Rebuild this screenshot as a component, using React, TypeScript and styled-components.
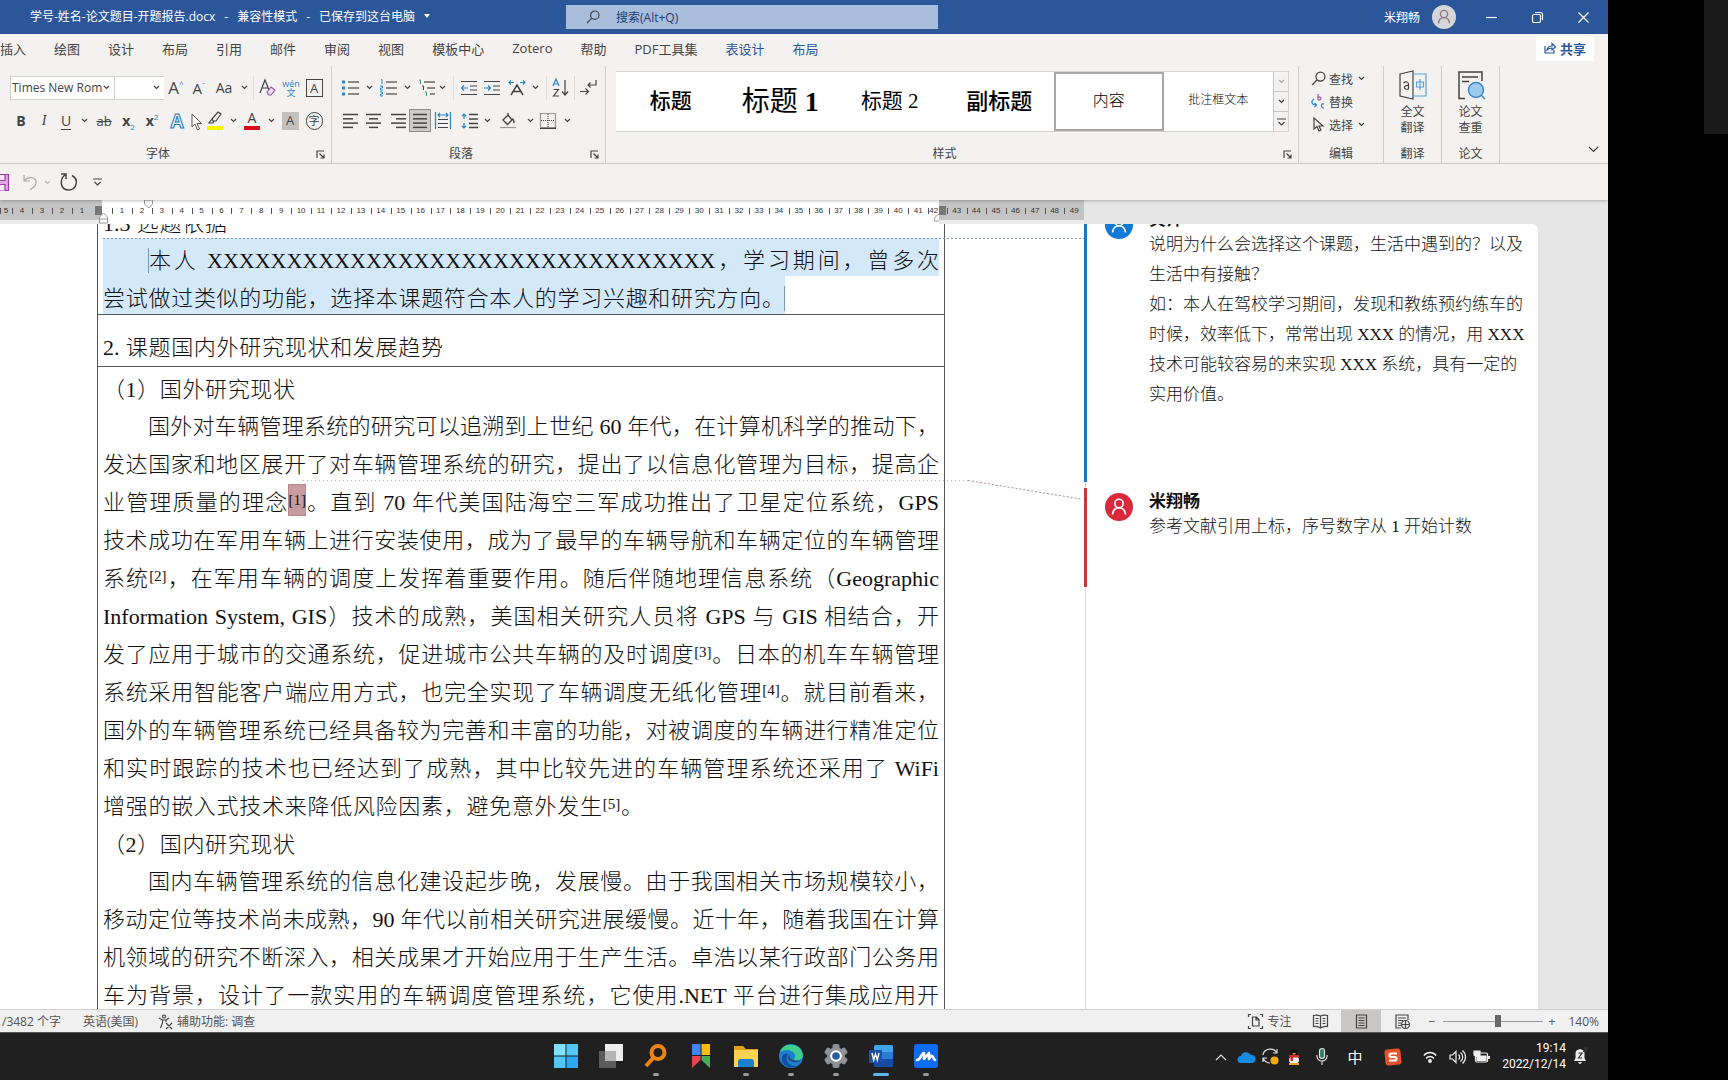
import React from "react";
import styled, { createGlobalStyle, css } from "styled-components";

const UI = `"Open Sans", "Noto Sans CJK SC", sans-serif`;
const SERIF = `"Liberation Serif", "Noto Sans CJK SC Light", "Noto Sans CJK SC", serif`;
const HEADING = `"Liberation Serif", "Noto Sans CJK SC", serif`;
const INK = "#444444";
const BLUE = "#2b579a";
const ICON_BLUE = "#2e86c8";

const GlobalStyle = createGlobalStyle`
  * { box-sizing: border-box; }
  body { margin: 0; background: #000; font-family: ${UI}; overflow: hidden; }
  button, input, select { font: inherit; color: inherit; }
  button { border: 0; padding: 0; background: transparent; }
  p, h1, h2, h3 { margin: 0; font-weight: inherit; font-size: inherit; }
`;

/* ---------- frame ---------- */
const Screen = styled.div`
  display: flex;
  height: 100vh;
  background: #000;
`;
const Desktop = styled.div`
  flex: 1;
  min-width: 0;
  display: flex;
  flex-direction: column;
  overflow: hidden;
`;
const SideBand = styled.aside`
  flex: 0 0 120px;
  display: flex;
  justify-content: flex-end;
  align-items: flex-start;
`;
const SidePanel = styled.div`
  width: 24px;
  height: 134px;
  background: #191919;
`;
const Icon = styled.svg`
  display: block;
  flex: none;
  fill: none;
  stroke: ${INK};
  stroke-width: 1.2;
  overflow: visible;
`;

/* ---------- title bar ---------- */
const TitleBar = styled.header`
  flex: 0 0 34px;
  display: flex;
  align-items: center;
  background: ${BLUE};
  color: #fff;
  font-size: 12px;
`;
const DocTitle = styled.div`
  flex: 0 0 566px;
  padding-left: 30px;
  padding-bottom: 2px;
  display: flex;
  align-items: center;
  gap: 9px;
  white-space: pre;
`;
const SearchBox = styled.label`
  display: flex;
  align-items: center;
  gap: 14px;
  flex: 0 1 372px;
  height: 24px;
  padding-left: 20px;
  background: #a9bedd;
  color: #1e3c70;
`;
const SearchInput = styled.input`
  flex: 1;
  min-width: 0;
  border: 0;
  outline: 0;
  background: transparent;
  &::placeholder { color: #1e3c70; opacity: 1; }
`;
const Account = styled.div`
  margin-left: auto;
  display: flex;
  align-items: center;
  gap: 12px;
`;
const WindowButtons = styled.div`
  display: flex;
  padding: 0 2px 0 12px;
`;
const WindowButton = styled.button`
  width: 46px;
  height: 34px;
  display: grid;
  place-items: center;
`;

/* ---------- tabs ---------- */
const TabRow = styled.nav`
  flex: 0 0 32px;
  display: flex;
  align-items: center;
  gap: 28px;
  background: #f3f2f1;
  font-size: 13px;
  color: ${INK};
  padding: 0 14px 4px 0;
`;
const Tab = styled.button<{ $context?: boolean }>`
  white-space: nowrap;
  height: 28px;
  color: ${(p) => (p.$context ? BLUE : INK)};
`;
const ShareButton = styled.button`
  margin-left: auto;
  display: flex;
  align-items: center;
  gap: 4px;
  height: 25px;
  padding: 0 8px;
  background: #fff;
  color: ${BLUE};
  font-weight: 700;
`;

/* ---------- ribbon ---------- */
const Ribbon = styled.section`
  flex: 0 0 98px;
  display: flex;
  background: #f3f2f1;
  border-bottom: 1px solid #d2d0ce;
  color: ${INK};
  font-size: 12px;
`;
const Group = styled.div<{ $w: number; $top?: number }>`
  flex: 0 0 ${(p) => p.$w}px;
  min-width: 0;
  display: flex;
  flex-direction: column;
  border-right: 1px solid #cfcdcb;
  padding-top: ${(p) => p.$top ?? 5}px;
`;
const ToolRow = styled.div<{ $left: number }>`
  display: flex;
  align-items: center;
  height: 33px;
  padding-left: ${(p) => p.$left}px;
`;
const Tool = styled.button<{ $w: number; $on?: boolean }>`
  flex: 0 0 ${(p) => p.$w}px;
  min-width: 0;
  height: 23px;
  display: grid;
  place-items: center;
  place-content: center;
  ${(p) => p.$on && css`background: #cdcbc9; border: 1px solid #8f8d8b;`}
`;
const Divider = styled.i<{ $w: number }>`
  flex: 0 0 ${(p) => p.$w}px;
  height: 24px;
  display: flex;
  justify-content: center;
  &::before { content: ""; width: 1px; background: #dddbd9; }
`;
const Field = styled.label<{ $w: number }>`
  flex: 0 0 ${(p) => p.$w}px;
  min-width: 0;
  display: flex;
  align-items: center;
  height: 24px;
  padding-right: 4px;
  background: #fff;
  border: 1px solid #d4d2d0;
  border-width: 1px 0 1px 1px;
`;
const Select = styled.select`
  flex: 1 1 0;
  width: 0;
  min-width: 0;
  appearance: none;
  border: 0;
  outline: 0;
  padding: 0 0 0 1px;
  background: transparent;
  overflow: hidden;
  text-overflow: clip;
  font-size: 12px;
`;
const GroupFoot = styled.div<{ $launcher?: boolean }>`
  margin-top: auto;
  display: grid;
  grid-template-columns: ${(p) => (p.$launcher ? "1fr 15px" : "1fr")};
  align-items: center;
  height: 18px;
  line-height: 18px;
  text-align: center;
  white-space: nowrap;
`;
const Gallery = styled.div`
  display: flex;
  margin: 0 9px 0 10px;
  height: 61px;
  background: #fff;
  border: 1px solid #d4d2d0;
  border-left: 0;
`;
const Style = styled.button<{ $size: number; $tone: string; $on?: boolean }>`
  flex: 1 1 0;
  min-width: 0;
  font-family: ${(p) => (p.$tone === "light" ? SERIF : HEADING)};
  font-size: ${(p) => p.$size}px;
  font-weight: ${(p) => (p.$tone === "heavy" ? 500 : 400)};
  color: #000;
  white-space: nowrap;
  border: 2px solid ${(p) => (p.$on ? "#a9a7a5" : "transparent")};
  padding-bottom: 5px;
`;
const GalleryScroll = styled.div`
  flex: 0 0 15px;
  display: flex;
  flex-direction: column;
`;
const ScrollButton = styled.button`
  flex: 1;
  display: grid;
  place-items: center;
  background: #f3f2f1;
  border: 1px solid #c8c6c4;
  border-width: 0 0 1px 1px;
  &:last-child { border-bottom: 0; }
`;
const EditButton = styled.button`
  display: grid;
  grid-template-columns: 20px 26px 14px;
  align-items: center;
  justify-items: center;
  height: 23px;
  margin-left: 9px;
  white-space: nowrap;
`;
const BigButton = styled.button`
  display: flex;
  flex-direction: column;
  align-items: center;
  gap: 5px;
  line-height: 16px;
`;
const RibbonEnd = styled.div`
  flex: 1;
  display: flex;
  justify-content: flex-end;
  align-items: flex-end;
  padding: 0 9px 10px;
`;

/* ---------- quick access ---------- */
const QuickBar = styled.div`
  flex: 0 0 36px;
  display: flex;
  align-items: center;
  background: #f3f2f1;
  box-shadow: 0 1px 3px #00000040;
  z-index: 1;
`;

/* ---------- ruler ---------- */
const Ruler = styled.div`
  flex: 0 0 24px;
  display: flex;
  align-items: flex-start;
  background: #e6e6e6;
  font-family: "Liberation Sans", sans-serif;
  font-size: 8px;
  line-height: 10px;
  color: #333;
`;
const RulerPart = styled.div<{ $w: number; $page?: boolean; $pad: string }>`
  position: relative;
  flex: 0 0 ${(p) => p.$w}px;
  height: 24px;
  display: flex;
  justify-content: ${(p) => (p.$page ? "flex-start" : "flex-end")};
  padding: ${(p) => p.$pad};
  background: ${(p) =>
    p.$page ? "#fff" : "linear-gradient(#c4c4c4 0 20px, #ececec 20px)"};
`;
const Mark = styled.span<{ $w?: number }>`
  flex: ${(p) => (p.$w ? `0 0 ${p.$w}px` : "1 1 0")};
  min-width: 0;
  display: flex;
  align-items: center;
  justify-content: center;
  height: 21px;
  background: linear-gradient(#555, #555) left center / 1px 6px no-repeat;
`;
const MarginGrip = styled.i<{ $end?: boolean }>`
  position: absolute;
  top: 6px;
  ${(p) => (p.$end ? "left: 0" : "right: 0")};
  width: 7px;
  height: 9px;
  background: #777;
`;
const IndentHandle = styled.svg<{ $x: number; $y: number }>`
  position: absolute;
  left: ${(p) => p.$x}px;
  top: ${(p) => p.$y}px;
  fill: #fff;
  stroke: #999;
  overflow: visible;
`;

/* ---------- document ---------- */
const Workspace = styled.main`
  position: relative;
  flex: 1;
  min-height: 0;
  display: flex;
  overflow: hidden;
  background: #e6e6e6;
`;
const Page = styled.article`
  flex: 0 0 1084px;
  background: #fff;
  padding-left: 97px;
`;
const FormTable = styled.table`
  width: 848px;
  margin-top: -24px;
  border-collapse: collapse;
  table-layout: fixed;
  font-family: ${SERIF};
  font-size: 22px;
  color: #111;
`;
const Cell = styled.td<{ $title?: boolean }>`
  border: 1px solid #555;
  padding: ${(p) => (p.$title ? "10px 5px 3px" : "0 5px")};
  vertical-align: top;
`;
const Line = styled.span<{ $measure?: number; $indent?: boolean; $selected?: boolean; $short?: boolean }>`
  display: block;
  width: ${(p) => (p.$measure ? p.$measure + "px" : "auto")};
  height: ${(p) => (p.$short ? 37 : 38)}px;
  padding-top: 8px;
  line-height: 30px;
  text-indent: ${(p) => (p.$indent ? "45px" : "0")};
  white-space: nowrap;
  text-align: justify;
  text-align-last: justify;
  background: ${(p) => (p.$selected ? "#d3e8f8" : "transparent")};
`;
const Caret = styled.span`
  border-left: 1px solid #7a98b4;
`;
const Cite = styled.span<{ $mark?: boolean }>`
  font-size: 15px;
  line-height: 20px;
  vertical-align: 5px;
  ${(p) => p.$mark && css`
    background: #c79da1;
    padding: 8px 0;
    box-shadow: inset 0 0 0 1px #b8868b;
  `}
`;
const Connectors = styled.svg`
  position: absolute;
  left: 0;
  top: 0;
  width: 1085px;
  height: 400px;
  fill: none;
  pointer-events: none;
`;

/* ---------- comments ---------- */
const Comments = styled.aside`
  flex: 0 0 454px;
  display: flex;
  flex-direction: column;
  gap: 6px;
  border-radius: 0 6px 0 0;
  background: linear-gradient(#dcdcdc, #dcdcdc) 1px 0 / 1px 100% no-repeat #fff;
`;
const Comment = styled.section<{ $color: string; $h: number; $first?: boolean }>`
  display: flex;
  gap: 16px;
  height: ${(p) => p.$h}px;
  flex: none;
  margin-top: ${(p) => (p.$first ? -18 : 0)}px;
  padding: 4px 0 0 18px;
  border-left: 3px solid ${(p) => p.$color};
  font-family: ${SERIF};
  font-size: 17px;
  line-height: 30px;
  color: #111;
`;
const Avatar = styled.div`
  padding-top: 1px;
`;
const CommentAuthor = styled.h3`
  font-family: ${HEADING};
  font-weight: 700;
  line-height: 20px;
`;
const CommentText = styled.p`
  white-space: nowrap;
`;

/* ---------- status bar ---------- */
const StatusBar = styled.footer`
  flex: 0 0 23px;
  display: flex;
  align-items: center;
  background: #f1f0f0;
  border-top: 1px solid #d0cece;
  color: #555;
  font-size: 12px;
  white-space: nowrap;
`;
const StatusText = styled.span`
  display: flex;
  align-items: center;
  gap: 4px;
  padding: 0 10px;
  &:first-child { padding: 0 12px 0 2px; }
`;
const StatusButton = styled.button<{ $w: number; $on?: boolean }>`
  width: ${(p) => p.$w}px;
  height: 22px;
  display: flex;
  align-items: center;
  justify-content: center;
  gap: 4px;
  background: ${(p) => (p.$on ? "#c9c7c6" : "transparent")};
`;
const StatusRight = styled.div`
  margin-left: auto;
  display: flex;
  align-items: center;
  padding-right: 9px;
`;
const ZoomSlider = styled.input`
  appearance: none;
  width: 100px;
  height: 16px;
  margin: 0 2px;
  background: linear-gradient(#999, #999) center / 100% 1px no-repeat;
  &::-webkit-slider-thumb {
    appearance: none;
    width: 6px;
    height: 12px;
    background: #666;
  }
`;
const ZoomValue = styled.span`
  width: 40px;
  text-align: right;
`;

/* ---------- taskbar ---------- */
const Taskbar = styled.footer`
  flex: 0 0 48px;
  display: flex;
  align-items: center;
  padding-left: 33.8%;
  background: #202020;
  border-top: 1px solid #555;
  color: #fff;
`;
const TaskButton = styled.button<{ $state?: "open" | "active" }>`
  flex: 0 0 45px;
  height: 46px;
  display: flex;
  flex-direction: column;
  align-items: center;
  padding-top: 10px;
  gap: 5px;
  &::after {
    content: "";
    height: 3px;
    border-radius: 2px;
    width: ${(p) => (p.$state === "active" ? 16 : p.$state ? 6 : 0)}px;
    background: ${(p) => (p.$state === "active" ? "#5bb8ee" : "#9a9a9a")};
  }
`;
const Tray = styled.div`
  margin-left: auto;
  display: flex;
  align-items: center;
  padding-right: 14px;
`;
const TrayButton = styled.button<{ $w: number }>`
  width: ${(p) => p.$w}px;
  height: 40px;
  display: grid;
  place-items: center;
  font-size: 15px;
`;
const Clock = styled.time`
  width: 72px;
  font-family: Roboto, sans-serif;
  font-size: 12px;
  line-height: 16px;
  padding-bottom: 2px;
  text-align: right;
`;

/* ---------- glyphs ---------- */
const Chevron = ({ color = INK }: { color?: string }) => (
  <Icon width="7" height="5" viewBox="0 0 7 5" style={{ stroke: color }}><path d="M1 1l2.500 2.500L6 1" /></Icon>
);
const Letter = styled.span<{ $size?: number; $bold?: boolean; $italic?: boolean; $deco?: string; $color?: string }>`
  font-size: ${(p) => p.$size || 15}px;
  line-height: 20px;
  font-weight: ${(p) => (p.$bold ? 700 : 400)};
  font-style: ${(p) => (p.$italic ? "italic" : "normal")};
  text-decoration: ${(p) => p.$deco || "none"};
  text-underline-offset: 3px;
  color: ${(p) => p.$color || INK};
  white-space: nowrap;
  & > sup, & > sub { font-size: 8px; line-height: 0; font-weight: 400; color: ${ICON_BLUE}; }
`;
const Boxed = styled(Letter)<{ $fill?: boolean; $round?: boolean }>`
  width: 17px;
  height: 18px;
  line-height: 16px;
  text-align: center;
  border: ${(p) => (p.$fill ? 0 : 1)}px solid ${INK};
  background: ${(p) => (p.$fill ? "#c3c1bf" : "transparent")};
  border-radius: ${(p) => (p.$round ? 9 : 0)}px;
`;
const Underbar = styled.span<{ $color: string }>`
  display: grid;
  justify-items: center;
  width: 16px;
  height: 19px;
  border-bottom: 4px solid ${(p) => p.$color};
`;
const Phonetic = styled.span`
  display: grid;
  justify-items: center;
  font-size: 9px;
  line-height: 9px;
  color: ${ICON_BLUE};
`;
const Outlined = styled.span`
  font-size: 19px;
  line-height: 20px;
  font-weight: 700;
  color: #e6f3fb;
  -webkit-text-stroke: 1px #2577b5;
`;
const Pointer = styled.svg`
  position: absolute;
  left: 191px;
  top: 113px;
  fill: #fff;
  stroke: #555;
`;

const Launcher = () => (
  <Icon width="9" height="9" viewBox="0 0 9 9"><path d="M1 8V1h7M3.500 3.500L8 8M8 4.500V8H4.500" /></Icon>
);
const Lens = ({ size = 14 }: { size?: number }) => (
  <Icon width={size} height={size} viewBox="0 0 14 14"><circle cx="8.800" cy="5.200" r="4.200" /><path d="M5.800 8.200L1 13" /></Icon>
);
const Lines = ({ rows }: { rows: [number, number][] }) => (
  <Icon width="16" height="16" viewBox="0 0 16 16" style={{ strokeWidth: 1.5 }}>
    {rows.map(([a, b], i) => <path key={i} d={`M${a} ${1.5 + i * 4.300}H${b}`} />)}
  </Icon>
);
const ListIcon = ({ kind }: { kind: "dot" | "num" | "multi" }) => (
  <Icon width="17" height="16" viewBox="0 0 17 16">
    {[2, 8, 14].map((y, i) => {
      const x = kind === "multi" ? 1 + i * 3 : 1;
      return (
        <g key={y}>
          <path d={`M${x + 5} ${y}H17`} />
          {kind === "dot" && <rect x="0" y={y - 1.5} width="3" height="3" fill={ICON_BLUE} stroke="none" />}
          {kind === "num" && <path d={i === 0 ? "M1 0l1-.5v4.500" : `M0 ${y - 2}h2.500v2H.5v2H3`} stroke={ICON_BLUE} strokeWidth="1" />}
          {kind === "multi" && <path d={`M${x} ${y - 2}h1.500v4`} stroke={i === 1 ? "#444" : "#4f9a70"} strokeWidth="1" />}
        </g>
      );
    })}
  </Icon>
);
const IndentIcon = ({ flip }: { flip?: boolean }) => (
  <Icon width="16" height="16" viewBox="0 0 16 16">
    <path d="M0 1.500h16M9 6h7M9 10h7M0 14.500h16" />
    <path stroke={ICON_BLUE} d={flip ? "M0 8h6M4 5.500L6.500 8 4 10.500" : "M7 8H1M3 5.500L.5 8 3 10.500"} />
  </Icon>
);
const Person = ({ size, bg, line }: { size: number; bg: string; line: string }) => (
  <Icon width={size} height={size} viewBox="0 0 28 28" style={{ stroke: line, strokeWidth: 1.600 }}>
    <circle cx="14" cy="14" r="14" fill={bg} stroke="none" />
    <circle cx="14" cy="10.500" r="4.200" />
    <path d="M7.500 21.500c.5-4.500 3-6.800 6.500-6.800s6 2.300 6.500 6.800" />
  </Icon>
);

const tabs = ["插入", "绘图", "设计", "布局", "引用", "邮件", "审阅", "视图", "模板中心", "Zotero", "帮助", "PDF工具集"];
const styles = [
  { name: "标题", size: 21, tone: "heavy" },
  { name: "标题 ", strong: "1", size: 28, tone: "regular" },
  { name: "标题 2", size: 21, tone: "regular" },
  { name: "副标题", size: 22, tone: "heavy" },
  { name: "内容", size: 16, tone: "light", on: true },
  { name: "批注框文本", size: 12, tone: "light" },
];
const range = (a: number, b: number) => Array.from({ length: b - a + 1 }, (_, i) => a + i);

const FontGroup = () => (
  <Group $w={332}>
    <ToolRow $left={10}>
      <Field $w={104}>
        <Select aria-label="字体"><option>Times New Roman</option></Select><Chevron />
      </Field>
      <Field $w={50}>
        <Select aria-label="字号"><option></option></Select><Chevron />
      </Field>
      <Tool $w={24} aria-label="增大字号"><Letter $size={17}>A<sup>^</sup></Letter></Tool>
      <Tool $w={22} aria-label="减小字号"><Letter $size={15}>A<sup>ˇ</sup></Letter></Tool>
      <Tool $w={28} aria-label="更改大小写"><Letter $size={14}>Aa</Letter></Tool>
      <Tool $w={12} aria-label="大小写选项"><Chevron /></Tool>
      <Divider $w={6} />
      <Tool $w={23} aria-label="清除格式">
        <Icon width="17" height="17" viewBox="0 0 17 17"><path d="M1 14L6 1l4 10M3 9h6" /><path d="M8 13l4-5 4 3-4 5H9.500z" fill="#f0dcf2" stroke="#9a5ba5" /></Icon>
      </Tool>
      <Tool $w={24} aria-label="拼音指南"><Phonetic><span>wén</span><span>文</span></Phonetic></Tool>
      <Tool $w={22} aria-label="字符边框"><Boxed $size={13}>A</Boxed></Tool>
    </ToolRow>
    <ToolRow $left={10}>
      <Tool $w={22} aria-label="加粗"><Letter $size={14} $bold>B</Letter></Tool>
      <Tool $w={24} aria-label="倾斜"><Letter $size={14} $italic style={{ fontFamily: SERIF }}>I</Letter></Tool>
      <Tool $w={20} aria-label="下划线"><Letter $size={14} $deco="underline">U</Letter></Tool>
      <Tool $w={16} aria-label="下划线选项"><Chevron /></Tool>
      <Tool $w={24} aria-label="删除线"><Letter $size={13} $deco="line-through">ab</Letter></Tool>
      <Tool $w={25} aria-label="下标"><Letter $size={14} $bold>x<sub>2</sub></Letter></Tool>
      <Tool $w={22} aria-label="上标"><Letter $size={14} $bold>x<sup>2</sup></Letter></Tool>
      <Tool $w={28} aria-label="文本效果"><Outlined>A</Outlined></Tool>
      <Tool $w={12} aria-label="文本效果选项" />
      <Tool $w={24} aria-label="突出显示">
        <Underbar $color="#f5f500"><Icon width="14" height="13" viewBox="0 0 14 13"><path d="M4 8L10 1l3 2-5 7H5zM4 8l-3 4h4l1-2" /></Icon></Underbar>
      </Tool>
      <Tool $w={12} aria-label="突出显示颜色"><Chevron /></Tool>
      <Tool $w={26} aria-label="字体颜色"><Underbar $color="#d80d18"><Letter $size={14} style={{ lineHeight: "14px" }}>A</Letter></Underbar></Tool>
      <Tool $w={12} aria-label="字体颜色选项"><Chevron /></Tool>
      <Tool $w={26} aria-label="字符底纹"><Boxed $size={13} $fill>A</Boxed></Tool>
      <Tool $w={22} aria-label="带圈字符"><Boxed $size={11} $round>字</Boxed></Tool>
    </ToolRow>
    <GroupFoot $launcher><span>字体</span><Launcher /></GroupFoot>
  </Group>
);

const ParagraphGroup = () => (
  <Group $w={274}>
    <ToolRow $left={8}>
      <Tool $w={20} aria-label="项目符号"><ListIcon kind="dot" /></Tool>
      <Tool $w={18} aria-label="项目符号选项"><Chevron /></Tool>
      <Tool $w={20} aria-label="编号"><ListIcon kind="num" /></Tool>
      <Tool $w={18} aria-label="编号选项"><Chevron /></Tool>
      <Tool $w={20} aria-label="多级列表"><ListIcon kind="multi" /></Tool>
      <Tool $w={12} aria-label="多级列表选项"><Chevron /></Tool>
      <Divider $w={10} />
      <Tool $w={22} aria-label="减少缩进量"><IndentIcon /></Tool>
      <Tool $w={24} aria-label="增加缩进量"><IndentIcon flip /></Tool>
      <Tool $w={26} aria-label="中文版式">
        <Icon width="18" height="16" viewBox="0 0 18 16"><path d="M3 15L9 5l6 10M5.500 11.500h7" strokeWidth="1.500" /><path stroke={ICON_BLUE} d="M1 2.500h5M3 .5L1 2.500l2 2M12 2.500h5M15 .5l2 2-2 2" /></Icon>
      </Tool>
      <Tool $w={10} aria-label="中文版式选项"><Chevron /></Tool>
      <Divider $w={12} />
      <Tool $w={18} aria-label="排序">
        <Icon width="16" height="18" viewBox="0 0 16 18"><path stroke={ICON_BLUE} d="M0 7l3-7 3 7M1 5h4" /><path d="M.5 10.500h5L.5 17h5.500M12 1v15M9 12.500l3 3.500 3-3.500" /></Icon>
      </Tool>
      <Divider $w={8} />
      <Tool $w={20} aria-label="显示编辑标记">
        <Icon width="17" height="16" viewBox="0 0 17 16"><path d="M16 0v5H8M10.500 2.500L8 5l2.500 2.500M0 11.500h8M5.500 8.500l3 3-3 3" /></Icon>
      </Tool>
    </ToolRow>
    <ToolRow $left={8}>
      <Tool $w={22} aria-label="左对齐"><Lines rows={[[0, 15], [0, 10], [0, 15], [0, 10]]} /></Tool>
      <Tool $w={24} aria-label="居中"><Lines rows={[[0, 15], [3, 12], [0, 15], [3, 12]]} /></Tool>
      <Tool $w={23} aria-label="右对齐"><Lines rows={[[1, 16], [6, 16], [1, 16], [6, 16]]} /></Tool>
      <Tool $w={22} $on aria-label="两端对齐"><Lines rows={[[1, 15], [1, 15], [1, 15], [1, 15]]} /></Tool>
      <Tool $w={24} aria-label="分散对齐">
        <Icon width="16" height="17" viewBox="0 0 16 17"><path stroke={ICON_BLUE} d="M.5 0v17M15.500 0v17M3 3h10M5 1L3 3l2 2M11 1l2 2-2 2" /><path d="M3 7.500h10M3 11.500h10M3 15.500h10" /></Icon>
      </Tool>
      <Tool $w={28} aria-label="行距">
        <Icon width="17" height="16" viewBox="0 0 17 16"><path stroke={ICON_BLUE} d="M3 1v5M3 10v5M1 3l2-2 2 2M1 13l2 2 2-2" /><path d="M8 1.500h9M8 6h9M8 10.500h9M8 14.500h9" strokeWidth="1.500" /></Icon>
      </Tool>
      <Tool $w={8} aria-label="行距选项"><Chevron /></Tool>
      <Tool $w={34} aria-label="底纹">
        <Icon width="16" height="16" viewBox="0 0 16 16"><path d="M3 7l5-5 4 5-4.500 4.500zM8 2V0M12 6c2 0 2 2 2 4" strokeWidth="1.400" /><path d="M0 14.500h16" stroke="#999" /></Icon>
      </Tool>
      <Tool $w={10} aria-label="底纹选项"><Chevron /></Tool>
      <Tool $w={26} aria-label="边框">
        <Icon width="16" height="16" viewBox="0 0 16 16"><path strokeDasharray="1 1" d="M.5.5h15v14M.5.5v14M8 1v13M1 7.500h14" /><path d="M0 15.200h16" strokeWidth="1.600" /></Icon>
      </Tool>
      <Tool $w={12} aria-label="边框选项"><Chevron /></Tool>
    </ToolRow>
    <GroupFoot $launcher><span>段落</span><Launcher /></GroupFoot>
  </Group>
);

const DropMark = () => (
  <Icon width="9" height="8" viewBox="0 0 9 8"><path d="M0 1h9M1.500 4l3 3 3-3" /></Icon>
);

const StatusGlyph = ({ children }: { children: React.ReactNode }) => (
  <Icon width="15" height="15" viewBox="0 0 15 15">{children}</Icon>
);

export default function App() {
  return (
    <>
      <GlobalStyle />
      <Screen>
        <Desktop>
          <TitleBar>
            <DocTitle>
              <span>学号-姓名-论文题目-开题报告.docx</span><span>-</span><span>兼容性模式</span><span>-</span><span>已保存到这台电脑</span>
              <Icon width="6" height="4" viewBox="0 0 6 4" style={{ fill: "#fff", stroke: "none" }}><path d="M0 0h6L3 4z" /></Icon>
            </DocTitle>
            <SearchBox>
              <Lens />
              <SearchInput type="text" placeholder="搜索(Alt+Q)" aria-label="搜索" />
            </SearchBox>
            <Account><span>米翔畅</span><Person size={24} bg="#d6d6da" line="#8b7e7c" /></Account>
            <WindowButtons>
              <WindowButton aria-label="最小化"><Icon width="11" height="11" viewBox="0 0 11 11" style={{ stroke: "#fff" }}><path d="M0 5.500h11" /></Icon></WindowButton>
              <WindowButton aria-label="还原"><Icon width="11" height="11" viewBox="0 0 11 11" style={{ stroke: "#fff" }}><rect x=".5" y="2.500" width="8" height="8" rx="1.500" /><path d="M3 .5h5.500a2 2 0 0 1 2 2V8" /></Icon></WindowButton>
              <WindowButton aria-label="关闭"><Icon width="11" height="11" viewBox="0 0 11 11" style={{ stroke: "#fff" }}><path d="M.5.5l10 10M10.500.5l-10 10" /></Icon></WindowButton>
            </WindowButtons>
          </TitleBar>

          <TabRow>
            {tabs.map((t) => <Tab key={t}>{t}</Tab>)}
            <Tab $context>表设计</Tab>
            <Tab $context>布局</Tab>
            <ShareButton>
              <Icon width="12" height="12" viewBox="0 0 12 12" style={{ stroke: BLUE }}><path d="M1 4v7h9V8M3 8c.5-3 2.500-4 5-4V1.500L11.500 5 8 8V6C6 6 4.500 6.500 3 8z" /></Icon>
              共享
            </ShareButton>
          </TabRow>

          <Ribbon>
            <FontGroup />
            <ParagraphGroup />
            <Group $w={693}>
              <Gallery>
                {styles.map((s) => (
                  <Style key={s.name} $size={s.size} $tone={s.tone} $on={s.on}>{s.name}{s.strong && <b>{s.strong}</b>}</Style>
                ))}
                <GalleryScroll>
                  <ScrollButton aria-label="向上"><Chevron color="#aaa" /></ScrollButton>
                  <ScrollButton aria-label="向下"><Chevron /></ScrollButton>
                  <ScrollButton aria-label="其他"><DropMark /></ScrollButton>
                </GalleryScroll>
              </Gallery>
              <GroupFoot $launcher><span>样式</span><Launcher /></GroupFoot>
            </Group>
            <Group $w={85} $top={1}>
              <EditButton><Lens size={15} /><span>查找</span><Chevron /></EditButton>
              <EditButton>
                <Icon width="14" height="16" viewBox="0 0 14 16"><path stroke="#9a5ba5" d="M7 0v6M7 3.500a1.700 1.500 0 1 1 0 2" /><path stroke={ICON_BLUE} d="M3 5c-3 2-3 6 2 6M3.500 9l2 2-2 2M13 10c-3-1.500-4 4 0 4" /></Icon>
                <span>替换</span>
              </EditButton>
              <EditButton>
                <Icon width="11" height="15" viewBox="0 0 11 15"><path d="M1 1v11l3-2.500L6 14l2-1-2-4h4z" /></Icon>
                <span>选择</span><Chevron />
              </EditButton>
              <GroupFoot><span>编辑</span></GroupFoot>
            </Group>
            <Group $w={58}>
              <BigButton>
                <Icon width="28" height="28" viewBox="0 0 28 28"><path d="M1 3l13-3v28L1 25z" /><path d="M14 3h13v22H14M21 8v11M17.500 11h7v5h-7z" stroke="#5aa2d4" /><path d="M4.500 12c2-2 5-1 5 1v5c-5 1.500-6-4 0-3.500" /></Icon>
                <span>全文<br />翻译</span>
              </BigButton>
              <GroupFoot><span>翻译</span></GroupFoot>
            </Group>
            <Group $w={58}>
              <BigButton>
                <Icon width="28" height="28" viewBox="0 0 28 28" style={{ strokeWidth: 1.5 }}><path d="M8 27.500H2V1h23v9M5 6h16M5 10.500h7" /><circle cx="19" cy="19" r="7.500" fill="#9dcbee" stroke="#3f86c4" /><path d="M24.500 24.500L28 28" stroke="#3f86c4" /></Icon>
                <span>论文<br />查重</span>
              </BigButton>
              <GroupFoot><span>论文</span></GroupFoot>
            </Group>
            <RibbonEnd>
              <button aria-label="折叠功能区"><Icon width="11" height="7" viewBox="0 0 11 7"><path d="M1 1l4.500 4.500L10 1" /></Icon></button>
            </RibbonEnd>
          </Ribbon>

          <QuickBar>
            <Tool $w={18} aria-label="保存">
              <Icon width="16" height="17" viewBox="0 0 16 17" style={{ stroke: "#9b3fa5", marginLeft: -16 }}><path d="M0 .5h15.500v16H0z" fill="#dca9e2" /><path d="M3 .5h9v6H3zM4 16.500v-6h8v6" fill="#f6e6f8" /></Icon>
            </Tool>
            <Tool $w={24} aria-label="撤消"><Icon width="15" height="17" viewBox="0 0 15 17" style={{ stroke: "#aaa" }}><path d="M1 1v6h6M1.500 6.500C5 2 12 3 13 7c1 4-2 6-6 9" /></Icon></Tool>
            <Tool $w={10} aria-label="撤消选项"><Chevron color="#bbb" /></Tool>
            <Tool $w={32} aria-label="重复"><Icon width="17" height="18" viewBox="0 0 17 18" style={{ strokeWidth: 1.5 }}><path d="M1 1h5v5M5.500 1.500C-1 6 0 17 8.500 17S19 6 12 2.500" /></Icon></Tool>
            <Tool $w={26} aria-label="自定义快速访问工具栏"><DropMark /></Tool>
          </QuickBar>

          <Ruler aria-hidden="true">
            <RulerPart $w={102} $pad="0 10px 0 0">
              {[5, 4, 3, 2, 1].map((n) => <Mark key={n} $w={n === 5 ? 12 : 20}>{n}</Mark>)}
              <MarginGrip />
            </RulerPart>
            <RulerPart $w={837} $page $pad="0 0 0 10px">
              {range(1, 41).map((n) => <Mark key={n}>{n}</Mark>)}
              <Mark $w={11}>42</Mark>
              <IndentHandle $x={42} $y={0} width="9" height="8"><path d="M.5 0h8v4l-4 4-4-4z" /></IndentHandle>
              <IndentHandle $x={-3} $y={13} width="9" height="10"><path d="M.5 10V4l4-4 4 4v6zM.5 6h8" /></IndentHandle>
              <IndentHandle $x={832} $y={14} width="9" height="8"><path d="M.5 7V4l4-4 4 4v3z" /></IndentHandle>
            </RulerPart>
            <RulerPart $w={145} $pad="0 0 0 8px">
              {range(43, 49).map((n) => <Mark key={n}>{n}</Mark>)}
              <MarginGrip $end />
            </RulerPart>
          </Ruler>

          <Workspace>
            <Page>
              <FormTable>
                <tbody>
                  <tr>
                    <Cell>
                      <h2><Line $measure={124} $short>1.3 选题依据</Line></h2>
                      <p>
                        <Line $indent $selected><Caret />本人 XXXXXXXXXXXXXXXXXXXXXXXXXXXXXXXX，学习期间，曾多次</Line>
                        <Line $selected $measure={682}>尝试做过类似的功能，选择本课题符合本人的学习兴趣和研究方向。<Caret /></Line>
                      </p>
                    </Cell>
                  </tr>
                  <tr>
                    <Cell $title><h2><Line $measure={340}>2. 课题国内外研究现状和发展趋势</Line></h2></Cell>
                  </tr>
                  <tr>
                    <Cell>
                      <h3><Line $measure={192} $short>（1）国外研究现状</Line></h3>
                      <p>
                        <Line $indent>国外对车辆管理系统的研究可以追溯到上世纪 60 年代，在计算机科学的推动下，</Line>
                        <Line>发达国家和地区展开了对车辆管理系统的研究，提出了以信息化管理为目标，提高企</Line>
                        <Line>业管理质量的理念<Cite $mark>[1]</Cite>。直到 70 年代美国陆海空三军成功推出了卫星定位系统，GPS</Line>
                        <Line>技术成功在军用车辆上进行安装使用，成为了最早的车辆导航和车辆定位的车辆管理</Line>
                        <Line>系统<Cite>[2]</Cite>，在军用车辆的调度上发挥着重要作用。随后伴随地理信息系统（Geographic</Line>
                        <Line>Information System, GIS）技术的成熟，美国相关研究人员将 GPS 与 GIS 相结合，开</Line>
                        <Line>发了应用于城市的交通系统，促进城市公共车辆的及时调度<Cite>[3]</Cite>。日本的机车车辆管理</Line>
                        <Line>系统采用智能客户端应用方式，也完全实现了车辆调度无纸化管理<Cite>[4]</Cite>。就目前看来，</Line>
                        <Line>国外的车辆管理系统已经具备较为完善和丰富的功能，对被调度的车辆进行精准定位</Line>
                        <Line>和实时跟踪的技术也已经达到了成熟，其中比较先进的车辆管理系统还采用了 WiFi</Line>
                        <Line $measure={540}>增强的嵌入式技术来降低风险因素，避免意外发生<Cite>[5]</Cite>。</Line>
                      </p>
                      <h3><Line $measure={192} $short>（2）国内研究现状</Line></h3>
                      <p>
                        <Line $indent>国内车辆管理系统的信息化建设起步晚，发展慢。由于我国相关市场规模较小，</Line>
                        <Line>移动定位等技术尚未成熟，90 年代以前相关研究进展缓慢。近十年，随着我国在计算</Line>
                        <Line>机领域的研究不断深入，相关成果才开始应用于生产生活。卓浩以某行政部门公务用</Line>
                        <Line>车为背景，设计了一款实用的车辆调度管理系统，它使用.NET 平台进行集成应用开</Line>
                      </p>
                    </Cell>
                  </tr>
                </tbody>
              </FormTable>
            </Page>
            <Comments>
              <Comment $color="#1a78c8" $h={276} $first>
                <Avatar><Person size={28} bg="#0f7ad6" line="#fff" /></Avatar>
                <div>
                  <CommentAuthor>黄师</CommentAuthor>
                  <CommentText>
                    说明为什么会选择这个课题，生活中遇到的？以及<br />
                    生活中有接触？<br />
                    如：本人在驾校学习期间，发现和教练预约练车的<br />
                    时候，效率低下，常常出现 XXX 的情况，用 XXX<br />
                    技术可能较容易的来实现 XXX 系统，具有一定的<br />
                    实用价值。
                  </CommentText>
                </div>
              </Comment>
              <Comment $color="#d13438" $h={99}>
                <Avatar><Person size={28} bg="#d9293d" line="#fff" /></Avatar>
                <div>
                  <CommentAuthor>米翔畅</CommentAuthor>
                  <CommentText>参考文献引用上标，序号数字从 1 开始计数</CommentText>
                </div>
              </Comment>
            </Comments>
            <Connectors>
              <path d="M103 14.500H1084" stroke="#8a9aa8" strokeDasharray="2 2" />
              <path d="M303 256.500H968" stroke="#dba5a8" strokeDasharray="1 3" />
              <path d="M968 256.500L1081 275" stroke="#b08a8c" strokeDasharray="2 2" />
            </Connectors>
          </Workspace>

          <StatusBar>
            <StatusText>/3482 个字</StatusText>
            <StatusText>英语(美国)</StatusText>
            <StatusText>
              <StatusGlyph><circle cx="6" cy="2.500" r="1.500" /><path d="M1 4l3.500 2v3L2.500 14M11 4L8 6v2M4.500 6H8M8 9l6 6M14 9l-6 6" /></StatusGlyph>
              辅助功能: 调查
            </StatusText>
            <StatusRight>
              <StatusButton $w={58}>
                <StatusGlyph><path d="M3 .5H.5V3M12 .5h2.500V3M3 14.500H.5V12M12 14.500h2.500V12M4.500 3h4l2.500 2.500V12H4.500zM8 3v3h3" /></StatusGlyph>专注
              </StatusButton>
              <StatusButton $w={42} aria-label="阅读视图"><StatusGlyph><path d="M7.500 2v12M7.500 2C5 1 3 1 .5 1.500v11c2.500-.5 4.500-.5 7 1.500 2.500-2 4.500-2 7-1.500v-11C12 1 10 1 7.500 2M2.500 4.500h3M2.500 7h3M2.500 9.500h3M9.500 4.500h3M9.500 7h3M9.500 9.500h3" /></StatusGlyph></StatusButton>
              <StatusButton $w={40} $on aria-label="页面视图"><StatusGlyph><path d="M2.500 1h10v13h-10zM4.500 4h6M4.500 6.500h6M4.500 9h6M4.500 11.500h6" /></StatusGlyph></StatusButton>
              <StatusButton $w={42} aria-label="Web 版式视图"><StatusGlyph><path d="M13 6V1H1v13h5M3 4h8M3 6.500h5M3 9h3M3 11.500h3" /><circle cx="10.500" cy="10.500" r="4" /><path d="M6.500 10.500h8M10.500 6.500v8" /></StatusGlyph></StatusButton>
              <StatusButton $w={18} aria-label="缩小">−</StatusButton>
              <ZoomSlider type="range" min={0} max={100} defaultValue={55} aria-label="显示比例" />
              <StatusButton $w={14} aria-label="放大">+</StatusButton>
              <ZoomValue>140%</ZoomValue>
            </StatusRight>
          </StatusBar>

          <Taskbar>
            <TaskButton aria-label="开始">
              <Icon width="24" height="24" viewBox="0 0 24 24" style={{ stroke: "none" }}><path fill="#7fe0fb" d="M0 0h11.500v11.500H0z" /><path fill="#53c6f8" d="M12.500 0H24v11.500H12.500zM0 12.500h11.500V24H0z" /><path fill="#2ba9f2" d="M12.500 12.500H24V24H12.500z" /></Icon>
            </TaskButton>
            <TaskButton aria-label="任务视图">
              <Icon width="24" height="24" viewBox="0 0 24 24" style={{ stroke: "none" }}><path fill="#5c5c5c" d="M0 7h17v17H0z" /><path fill="#eee" d="M6 0h18v17H6z" /><path fill="#b5b5b5" d="M6 7h11v10H6z" /></Icon>
            </TaskButton>
            <TaskButton $state="open" aria-label="搜索">
              <Icon width="24" height="24" viewBox="0 0 24 24" style={{ stroke: "#f08418", strokeWidth: 4 }}><circle cx="14" cy="8.500" r="6.500" /><path d="M9.500 13.500L2 22" /></Icon>
            </TaskButton>
            <TaskButton aria-label="书签">
              <Icon width="24" height="24" viewBox="0 0 24 24" style={{ stroke: "none" }}><path fill="#4285f4" d="M3 0h8.500v11H3z" /><path fill="#fbbc05" d="M12.500 0H21v11h-8.500z" /><path fill="#ea4355" d="M3 12h8.500v4L3 24z" /><path fill="#45b058" d="M12.500 12H21v12l-8.500-8z" /></Icon>
            </TaskButton>
            <TaskButton $state="open" aria-label="文件资源管理器">
              <Icon width="26" height="24" viewBox="0 0 26 24" style={{ stroke: "none" }}><path fill="#e0a21c" d="M1 2h9l3 3h12v6H1z" /><path fill="#fbd353" d="M1 6h24v17H1z" /><path fill="#1b7fd0" d="M5 23v-5q0-3 3-3h10q3 0 3 3v5z" /></Icon>
            </TaskButton>
            <TaskButton $state="open" aria-label="Edge">
              <Icon width="24" height="24" viewBox="0 0 24 24" style={{ stroke: "none" }}><circle cx="12" cy="12" r="12" fill="#1c7fd0" /><path fill="#3ccf8e" d="M1 8C4-2 22-2 24 11c0 4-4 6-8 5-3-1 1-2 0-5C14 5 5 5 1 8z" /><path fill="#124f9e" d="M9 10c-4 6 1 13 9 12-7 4-16-1-15-8 0-3 3-5 6-4z" /><path fill="#202020" d="M11 10c-2 4 3 8 11 6-5 4-12 2-13-2 0-2 1-3 2-4z" opacity=".5" /></Icon>
            </TaskButton>
            <TaskButton $state="open" aria-label="设置">
              <Icon width="24" height="24" viewBox="0 0 24 24" style={{ stroke: "none" }}>
                <g fill="#8d9298">{[0, 60, 120].map((a) => <rect key={a} x="8.500" y="0" width="7" height="24" rx="2" transform={`rotate(${a} 12 12)`} />)}<circle cx="12" cy="12" r="9" /></g>
                <circle cx="12" cy="12" r="4.800" fill="#2c5f9e" stroke="#fff" strokeWidth="2" />
              </Icon>
            </TaskButton>
            <TaskButton $state="active" aria-label="Word">
              <Icon width="24" height="24" viewBox="0 0 24 24" style={{ stroke: "none" }}><rect x="5" y="1" width="19" height="22" rx="2" fill="#2b7cd3" /><path fill="#41a5ee" d="M5 3q0-2 2-2h15q2 0 2 2v5H5z" /><path fill="#174aa5" d="M5 15h19v6q0 2-2 2H7q-2 0-2-2z" /><rect x="0" y="6" width="13" height="13" rx="1" fill="#1d4fa8" /><path d="M3 9l1.700 7L6.500 10l1.800 6L10 9" fill="none" stroke="#fff" strokeWidth="1.400" /></Icon>
            </TaskButton>
            <TaskButton $state="open" aria-label="会议">
              <Icon width="24" height="24" viewBox="0 0 24 24" style={{ stroke: "none" }}><rect width="24" height="24" rx="3" fill="#0c6df2" /><path d="M3 16c4 0 4-7 7-7v6l5-6v6l2-3c2-1 3 4 4 4" fill="none" stroke="#fff" strokeWidth="2.600" strokeLinejoin="round" strokeLinecap="round" /></Icon>
            </TaskButton>

            <Tray>
              <TrayButton $w={26} aria-label="显示隐藏的图标"><Icon width="12" height="8" viewBox="0 0 12 8" style={{ stroke: "#ddd" }}><path d="M1 7l5-5 5 5" /></Icon></TrayButton>
              <TrayButton $w={24} aria-label="OneDrive"><Icon width="17" height="12" viewBox="0 0 17 12" style={{ stroke: "none" }}><path fill="#1689e0" d="M3 12a3.500 3.500 0 0 1 0-7A5.500 5.500 0 0 1 13 4a4 4 0 0 1 1 8z" /></Icon></TrayButton>
              <TrayButton $w={24} aria-label="更新"><Icon width="17" height="17" viewBox="0 0 17 17" style={{ stroke: "#ddd" }}><path d="M1 7C2 0 12-1 15 5M15 1v4h-4M1 14v-4h4M1 10c2 4 4 5 7 5" /><circle cx="12.500" cy="12.500" r="4" fill="#f5a915" stroke="none" /></Icon></TrayButton>
              <TrayButton $w={24} aria-label="QQ"><Icon width="12" height="16" viewBox="0 0 12 16" style={{ stroke: "none" }}><ellipse cx="6" cy="4" rx="3.500" ry="4" fill="#111" /><ellipse cx="6" cy="11" rx="5" ry="4.500" fill="#f2f2f2" /><path fill="#d82a2a" d="M1 6h10v2.500H5V12H2.500V8.500H1z" /><path fill="#efa41c" d="M4 4h4L6 6zM1 14h10v2H1z" /></Icon></TrayButton>
              <TrayButton $w={32} aria-label="麦克风"><Icon width="12" height="17" viewBox="0 0 12 17" style={{ stroke: "#ddd" }}><rect x="3.500" y=".5" width="5" height="10" rx="2.500" fill="#2f7f68" /><path d="M.8 7c0 8 10.400 8 10.400 0M6 13v4" /></Icon></TrayButton>
              <TrayButton $w={34} aria-label="输入法">中</TrayButton>
              <TrayButton $w={42} aria-label="搜狗输入法"><Icon width="16" height="16" viewBox="0 0 16 16" style={{ stroke: "none" }}><rect width="16" height="16" rx="3" fill="#e8502a" transform="rotate(-6 8 8)" /><path d="M12 4.500H6.500q-2 0-2 1.800t2 1.700h3q2 0 2 1.800t-2 1.700H4" fill="none" stroke="#fff" strokeWidth="2.200" /></Icon></TrayButton>
              <TrayButton $w={32} aria-label="网络"><Icon width="14" height="12" viewBox="0 0 14 12" style={{ stroke: "#eee", strokeWidth: 1.400 }}><path d="M.8 4.500c3.500-4 9-4 12.400 0M3 7.500c2.500-2.700 5.500-2.700 8 0" /><circle cx="7" cy="10" r="1.200" fill="#eee" /></Icon></TrayButton>
              <TrayButton $w={22} aria-label="音量"><Icon width="17" height="14" viewBox="0 0 17 14" style={{ stroke: "#eee" }}><path d="M1 5v4h2.500L7 12.500v-11L3.500 5zM9.500 4.500c1.500 1.500 1.500 3.500 0 5M11.500 2.500c3 2.500 3 6.500 0 9M13.500.5c4 3.500 4 9.500 0 13" /></Icon></TrayButton>
              <TrayButton $w={26} aria-label="电池"><Icon width="17" height="13" viewBox="0 0 17 13" style={{ stroke: "#eee" }}><rect x="2.500" y="3" width="12" height="9" rx="1.500" /><path d="M16 6v3" strokeWidth="2" /><path d="M4 6h9v4.500H4zM1 1h6v4l-3 2-3-2z" fill="#eee" /></Icon></TrayButton>
              <Clock>19:14<br />2022/12/14</Clock>
              <TrayButton $w={28} aria-label="通知"><Icon width="14" height="17" viewBox="0 0 14 17" style={{ stroke: "none" }}><path fill="#eee" d="M1 13l1.500-3V5C3 0 11 0 11.500 5v5l1.500 3zM5 14h4q-2 4-4 0z" /><path d="M5.500 5H9l-3.500 5H9M11 0h3l-3 3.500h3" fill="none" stroke="#333" /></Icon></TrayButton>
            </Tray>
          </Taskbar>
        </Desktop>
        <SideBand><SidePanel /></SideBand>
      </Screen>
      <Pointer width="12" height="18" viewBox="0 0 12 18"><path d="M1 1v13l3-3 2.500 6 2-1L6 10.500h4.500z" /></Pointer>
    </>
  );
}
